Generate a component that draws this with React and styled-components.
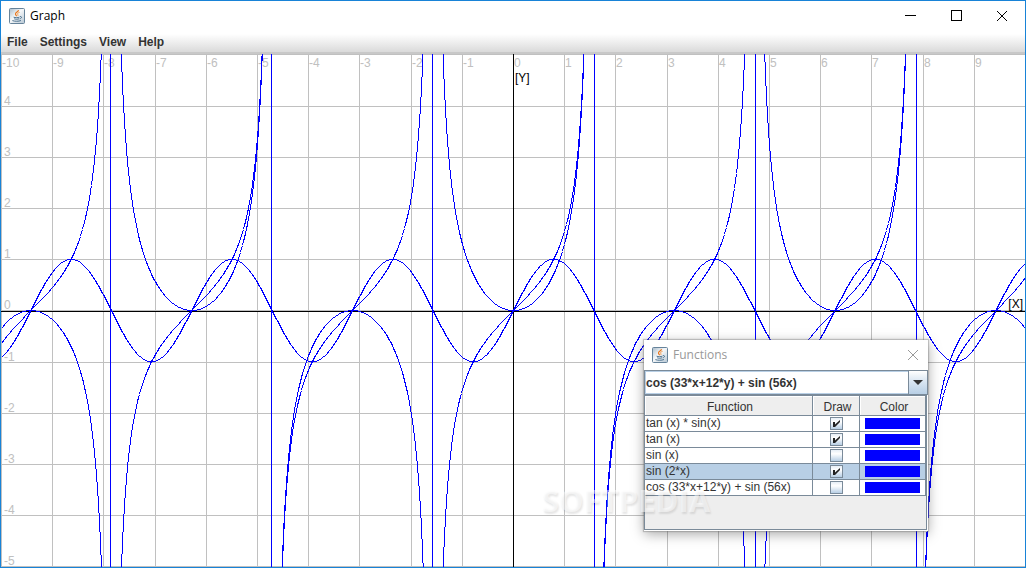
import React, { useLayoutEffect, useRef, useState } from "react";
import styled, { createGlobalStyle } from "styled-components";

const GlobalStyle = createGlobalStyle`
  * {
    box-sizing: border-box;
  }
  body {
    margin: 0;
    font-family: "Liberation Sans", Arial, sans-serif;
    font-size: 12px;
    color: #333;
    overflow: hidden;
  }
  button, select, input {
    font: inherit;
    color: inherit;
    margin: 0;
    padding: 0;
    border: 0;
    background: none;
    border-radius: 0;
  }
`;

const Frame = styled.div`
  position: relative;
  display: flex;
  flex-direction: column;
  height: 100vh;
  border: 1px solid #1883d7;
  background: #fff;
`;
const TitleBar = styled.header`
  display: flex;
  align-items: center;
  height: ${({ $small }) => ($small ? "30px" : "29px")};
  padding-left: 8px;
  gap: 5px;
  background: #fff;
`;
const Title = styled.h1`
  flex: 1;
  margin: 0;
  font-family: "Open Sans", "Noto Sans", sans-serif;
  font-size: 12px;
  line-height: 16px;
  font-weight: 400;
  color: ${({ $inactive }) => ($inactive ? "#999" : "#000")};
`;
const WindowControls = styled.div`
  display: flex;
  height: 100%;
`;
const WindowButton = styled.button`
  display: grid;
  place-items: center;
  width: ${({ $small }) => ($small ? "30px" : "46px")};
  height: 100%;
  color: ${({ $inactive }) => ($inactive ? "#999" : "#000")};
`;
const MenuBar = styled.nav`
  display: flex;
  align-items: center;
  gap: 12px;
  height: 24px;
  padding: 2px 6px 0;
  background: linear-gradient(#fff, #fff 4px, #dadada 22px);
  border-bottom: 2px solid #c8c8c8;
`;
const MenuItem = styled.button`
  font-weight: 700;
  line-height: 16px;
`;
const PlotArea = styled.main`
  flex: 1;
  min-height: 0;
  overflow: hidden;
`;
const PlotSvg = styled.svg`
  display: block;
  width: 100%;
  height: 100%;
  text {
    font-size: 12px;
  }
`;

const Dialog = styled.section`
  position: absolute;
  top: 339px;
  left: 643px;
  width: 284px;
  background: #fff;
  box-shadow: 0 0 1px 1px rgba(120, 120, 120, 0.4),
    0 3px 12px rgba(0, 0, 0, 0.35);
`;
const Combo = styled.div`
  display: grid;
  grid-template-columns: 1fr 19px;
  height: 25px;
  border: 1px solid #7a8a99;
`;
const ComboSelect = styled.select`
  grid-area: 1 / 1 / 2 / 3;
  appearance: none;
  width: 100%;
  padding-left: 1px;
  font-weight: 700;
  outline: 1px solid #b8cfe5;
  outline-offset: -1px;
`;
const ComboArrow = styled.span`
  grid-area: 1 / 2;
  display: grid;
  place-items: center;
  border-left: 1px solid #7a8a99;
  background: linear-gradient(#fff, #dde8f3 40%, #b8cfe5);
  pointer-events: none;
`;
const TablePane = styled.div`
  height: 135px;
  margin: 0 1px 1px 0;
  border: 1px solid #7a8a99;
  background: #eee;
`;
const FunctionTable = styled.table`
  width: 100%;
  table-layout: fixed;
  border-collapse: separate;
  border-spacing: 0;
`;
const HeadCell = styled.th`
  width: ${({ $width }) => $width || "auto"};
  height: 20px;
  padding: 2px 0 0 3px;
  font-weight: 400;
  line-height: 16px;
  border-right: 1px solid #7a8a99;
  border-bottom: 1px solid #7a8a99;
  box-shadow: inset 1px 1px #fff;
`;
const Row = styled.tr`
  background: ${({ $selected }) => ($selected ? "#b8cfe5" : "#fff")};
`;
const Cell = styled.td`
  height: 16px;
  padding: 0 ${({ $pad }) => $pad || "1px"};
  line-height: 15px;
  white-space: nowrap;
  border-right: 1px solid #7a8a99;
  border-bottom: 1px solid #7a8a99;
`;
const CheckWrap = styled.span`
  display: grid;
  justify-content: center;
  align-items: center;
  height: 15px;
  > * {
    grid-area: 1 / 1;
  }
  svg {
    pointer-events: none;
  }
`;
const CheckInput = styled.input`
  appearance: none;
  width: 13px;
  height: 13px;
  border: 1px solid #7a8a99;
  background: linear-gradient(#e6eef6, #fff 35%, #b8cfe5);
`;
const Swatch = styled.button`
  display: block;
  width: 100%;
  height: 11px;
  background: ${({ $color }) => $color};
`;
const Watermark = styled.div`
  position: absolute;
  left: 541px;
  top: 479px;
  font-family: "Open Sans", sans-serif;
  font-size: 31px;
  line-height: 40px;
  font-weight: 700;
  color: rgba(255, 255, 255, 0.5);
  text-shadow: 1px 2px 2px rgba(0, 0, 0, 0.1);
  pointer-events: none;
`;

const FUNCTIONS = [
  { label: "tan (x) * sin(x)", fn: (x) => Math.tan(x) * Math.sin(x), poles: true, draw: true },
  { label: "tan (x)", fn: Math.tan, poles: true, draw: true },
  { label: "sin (x)", fn: Math.sin, draw: false },
  { label: "sin (2*x)", fn: (x) => Math.sin(2 * x), draw: true },
  {
    label: "cos (33*x+12*y) + sin (56x)",
    fn: (x) => Math.cos(33 * x) + Math.sin(56 * x),
    draw: false,
  },
];

const JavaIcon = () => (
  <svg width="16" height="16" viewBox="0 0 16 16" aria-hidden="true">
    <defs>
      <linearGradient id="java-bg" x1="0" y1="0" x2="1" y2="1">
        <stop offset="0" stopColor="#a9bccb" />
        <stop offset="0.45" stopColor="#f6f8fa" />
        <stop offset="1" stopColor="#b4c5d2" />
      </linearGradient>
    </defs>
    <rect x="0.5" y="0.5" width="15" height="15" rx="1" fill="url(#java-bg)" stroke="#66839a" />
    <path d="M9.4 2.2C9.8 3.7 6.2 4.4 6.5 6.1c.1.8.9 1.2 1 2.1" fill="none" stroke="#e8751a" strokeWidth="1.2" />
    <path d="M10.6 4.3C8.7 4.9 8.2 5.6 8.8 6.6c.4.6.2 1-.3 1.5" fill="none" stroke="#ef9a4d" />
    <path d="M4.6 9.2c1.8.6 4.2.6 5.8 0M5.2 10.8c1.5.6 3.4.6 4.8 0M3.4 12.6c2.3.9 6.3.9 8.6-.1" fill="none" stroke="#4f7390" />
    <path d="M10.9 8.6c2.3-.5 2.2 1.7-.3 2.3" fill="none" stroke="#4f7390" />
  </svg>
);

const CloseIcon = () => (
  <svg width="12" height="12" viewBox="0 0 12 12" aria-hidden="true">
    <path d="M1 1l10 10M11 1L1 11" stroke="currentColor" fill="none" />
  </svg>
);

const curvePath = (fn, poles, { width, height, scale, ox, oy }) => {
  let d = "";
  let prev = null;
  for (let px = 0; px <= width; px++) {
    const value = fn((px - ox) / scale);
    const y = Math.round(oy - value * scale);
    const jump = poles && prev !== null && Math.abs(value) > 1.5 && value * prev < 0;
    const py = Math.max(-4000, Math.min(height + 4000, y));
    d += `${prev === null || jump ? "M" : "L"}${px + 0.5} ${py + 0.5}`;
    prev = value;
  }
  if (poles) {
    for (let p = Math.PI / 2; p * scale < width / 2; p += Math.PI) {
      const off = Math.ceil(p * scale);
      d += `M${ox - off + 0.5} 0V${height}M${ox + off + 0.5} 0V${height}`;
    }
  }
  return d;
};

const Plot = ({ functions }) => {
  const ref = useRef(null);
  const [size, setSize] = useState({ width: 1024, height: 513 });

  useLayoutEffect(() => {
    const update = () => {
      const box = ref.current.getBoundingClientRect();
      setSize({ width: Math.round(box.width), height: Math.round(box.height) });
    };
    update();
    window.addEventListener("resize", update);
    return () => window.removeEventListener("resize", update);
  }, []);

  const { width, height } = size;
  const scale = width / 20;
  const ox = Math.round(width / 2);
  const oy = Math.floor(height / 2);
  const rows = Math.floor((height / 2 + 1) / scale);
  const xs = Array.from({ length: 20 }, (_, i) => i - 10);
  const ys = Array.from({ length: rows * 2 + 1 }, (_, i) => i - rows);
  const lineX = (v) => Math.round(ox + v * scale);
  const lineY = (v) => Math.floor(oy + 0.9 - v * scale);

  return (
    <PlotArea ref={ref}>
      <PlotSvg role="img" aria-label="Graph">
        <g stroke="#c0c0c0" shapeRendering="crispEdges">
          {xs.map((v) => (
            <line key={v} x1={lineX(v) + 0.5} x2={lineX(v) + 0.5} y1="0" y2={height} />
          ))}
          {ys.map((v) => (
            <line key={v} x1="0" x2={width} y1={lineY(v) + 0.5} y2={lineY(v) + 0.5} />
          ))}
        </g>
        <g fill="#c0c0c0">
          {xs.map((v) => (
            <text key={v} x={lineX(v) + 1} y="13">{v}</text>
          ))}
          {ys.filter((v) => v < 5).map((v) => (
            <text key={v} x="3" y={lineY(v) - 1}>{v}</text>
          ))}
        </g>
        <g stroke="#000" shapeRendering="crispEdges">
          <line x1="0" x2={width} y1={oy + 1.5} y2={oy + 1.5} />
          <line x1={ox + 0.5} x2={ox + 0.5} y1="0" y2={height} />
        </g>
        <g fill="none" stroke="#00f" shapeRendering="crispEdges">
          {functions.filter((f) => f.draw).map((f) => (
            <path key={f.label} d={curvePath(f.fn, f.poles, { width, height, scale, ox, oy })} />
          ))}
        </g>
        <g fill="#000">
          <text x={ox + 2} y="28">[Y]</text>
          <text x={width - 2} y={oy - 2} textAnchor="end">[X]</text>
        </g>
      </PlotSvg>
    </PlotArea>
  );
};

const FunctionsDialog = ({ functions, setFunctions }) => {
  const [selected, setSelected] = useState(3);
  const toggle = (index) =>
    setFunctions(functions.map((f, i) => (i === index ? { ...f, draw: !f.draw } : f)));

  return (
    <Dialog aria-label="Functions">
      <TitleBar $small>
        <JavaIcon />
        <Title as="h2" $inactive>Functions</Title>
        <WindowButton $small $inactive aria-label="Close functions">
          <CloseIcon />
        </WindowButton>
      </TitleBar>
      <Combo>
        <ComboSelect aria-label="Function" defaultValue={FUNCTIONS[4].label}>
          {FUNCTIONS.map((f) => (
            <option key={f.label}>{f.label}</option>
          ))}
        </ComboSelect>
        <ComboArrow>
          <svg width="10" height="5" viewBox="0 0 10 5" aria-hidden="true">
            <path d="M0 0h10L5 5z" fill="#333" />
          </svg>
        </ComboArrow>
      </Combo>
      <TablePane>
        <FunctionTable>
          <thead>
            <tr>
              <HeadCell>Function</HeadCell>
              <HeadCell $width="47px">Draw</HeadCell>
              <HeadCell $width="66px">Color</HeadCell>
            </tr>
          </thead>
          <tbody>
            {functions.map((f, i) => (
              <Row key={f.label} $selected={i === selected} onClick={() => setSelected(i)}>
                <Cell>{f.label}</Cell>
                <Cell>
                  <CheckWrap>
                    <CheckInput
                      type="checkbox"
                      aria-label={`Draw ${f.label}`}
                      checked={f.draw}
                      onChange={() => toggle(i)}
                    />
                    {f.draw && (
                      <svg width="13" height="13" viewBox="0 0 13 13" aria-hidden="true">
                        <path d="M3 5h2v2.5L10 3v2L5 10H3z" fill="#222" />
                      </svg>
                    )}
                  </CheckWrap>
                </Cell>
                <Cell $pad="5px">
                  <Swatch $color="#00f" aria-label={`Color of ${f.label}`} />
                </Cell>
              </Row>
            ))}
          </tbody>
        </FunctionTable>
      </TablePane>
    </Dialog>
  );
};

const App = () => {
  const [functions, setFunctions] = useState(FUNCTIONS);

  return (
    <>
      <GlobalStyle />
      <Frame>
        <TitleBar>
          <JavaIcon />
          <Title>Graph</Title>
          <WindowControls>
            <WindowButton aria-label="Minimize">
              <svg width="11" height="11" viewBox="0 0 11 11" aria-hidden="true">
                <path d="M0 5.5h11" stroke="currentColor" shapeRendering="crispEdges" />
              </svg>
            </WindowButton>
            <WindowButton aria-label="Maximize">
              <svg width="11" height="11" viewBox="0 0 11 11" aria-hidden="true">
                <path d="M.5.5h10v10H.5z" stroke="currentColor" fill="none" shapeRendering="crispEdges" />
              </svg>
            </WindowButton>
            <WindowButton aria-label="Close">
              <CloseIcon />
            </WindowButton>
          </WindowControls>
        </TitleBar>
        <MenuBar>
          {["File", "Settings", "View", "Help"].map((item) => (
            <MenuItem key={item}>{item}</MenuItem>
          ))}
        </MenuBar>
        <Plot functions={functions} />
        <FunctionsDialog functions={functions} setFunctions={setFunctions} />
        <Watermark>SOFTPEDIA</Watermark>
      </Frame>
    </>
  );
};

export default App;
